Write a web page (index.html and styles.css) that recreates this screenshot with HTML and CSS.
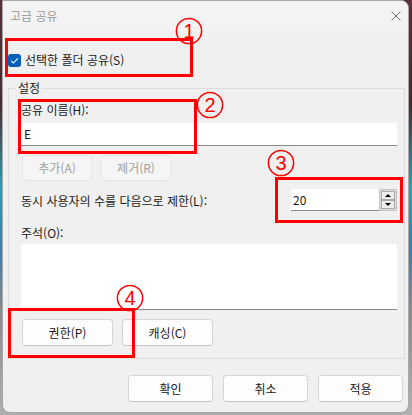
FILE: index.html
```html
<!DOCTYPE html>
<html lang="ko">
<head>
<meta charset="utf-8">
<title>고급 공유</title>
<link rel="stylesheet" href="styles.css">
</head>
<body>
<div class="dialog">
  <div class="titlebar">
    <span class="title">고급 공유</span>
    <svg class="close" width="10" height="10" viewBox="0 0 10 10"><path d="M0.5 0.5 L9.5 9.5 M9.5 0.5 L0.5 9.5" stroke="#6e6e6e" stroke-width="1" fill="none"/></svg>
  </div>
  <div class="content">
    <div class="check-row">
      <span class="checkbox"><svg width="13" height="13" viewBox="0 0 13 13"><path d="M3.3 6.8 L5.5 9 L9.8 4.3" stroke="#fff" stroke-width="1.1" fill="none"/></svg></span>
      <span>선택한 폴더 공유(S)</span>
    </div>
    <div class="group">
      <div class="legend"><span>설정</span></div>
      <div class="label lbl-name">공유 이름(H):</div>
      <div class="field field-name">E</div>
      <div class="btn-row">
        <div class="btn disabled w70">추가(A)</div>
        <div class="btn disabled w70">제거(R)</div>
      </div>
      <div class="limit-row">
        <span>동시 사용자의 수를 다음으로 제한(L):</span>
        <div class="spin">
          <div class="field spin-field">20</div>
          <div class="spin-btns">
            <div class="spin-btn"><span class="tri-up"></span></div>
            <div class="spin-btn"><span class="tri-down"></span></div>
          </div>
        </div>
      </div>
      <div class="label lbl-comment">주석(O):</div>
      <div class="textarea"></div>
      <div class="btn-row btn-row2">
        <div class="btn w91">권한(P)</div>
        <div class="btn w91">캐싱(C)</div>
      </div>
    </div>
    <div class="footer">
      <div class="btn w85">확인</div>
      <div class="btn w85">취소</div>
      <div class="btn w85">적용</div>
    </div>
  </div>
</div>

<div class="annot box1"></div>
<div class="annot box2"></div>
<div class="annot box3"></div>
<div class="annot box4"></div>

<svg class="num num1" width="28" height="28" viewBox="0 0 28 28"><circle cx="14" cy="14" r="12.6" stroke="#f00" stroke-width="1.5" fill="none"/><text x="14" y="21" text-anchor="middle">1</text></svg>
<svg class="num num2" width="28" height="28" viewBox="0 0 28 28"><circle cx="14" cy="14" r="12.6" stroke="#f00" stroke-width="1.5" fill="none"/><text x="14" y="21" text-anchor="middle">2</text></svg>
<svg class="num num3" width="28" height="28" viewBox="0 0 28 28"><circle cx="14" cy="14" r="12.6" stroke="#f00" stroke-width="1.5" fill="none"/><text x="14" y="21" text-anchor="middle">3</text></svg>
<svg class="num num4" width="28" height="28" viewBox="0 0 28 28"><circle cx="14" cy="14" r="12.6" stroke="#f00" stroke-width="1.5" fill="none"/><text x="14" y="21" text-anchor="middle">4</text></svg>
</body>
</html>
```
FILE: styles.css
```css
html, body {
  margin: 0;
  padding: 0;
}
body {
  width: 412px;
  height: 415px;
  position: relative;
  overflow: hidden;
  background: linear-gradient(180deg, #5a3038 0%, #4a2a30 25%, #2a9fb5 45%, #3b7fb0 60%, #8a8a8a 75%, #b0b0b0 100%);
  font-family: "Noto Sans CJK KR", "Noto Sans", sans-serif;
  font-size: 12px;
  color: #1a1a1a;
}
.dialog {
  margin-left: 2px;
  width: 407px;
  height: 413px;
  box-sizing: border-box;
  border: 1px solid #a8a8a8;
  border-radius: 0 8px 8px 8px;
  background: #f0f0f0;
  overflow: hidden;
  display: flex;
  flex-direction: column;
}
.titlebar {
  height: 30px;
  flex: none;
  background: #f3f3f3;
  display: flex;
  align-items: center;
  justify-content: space-between;
  padding: 0 7px;
}
.title {
  color: #9a9a9a;
  line-height: 16px;
}
.close {
  display: block;
}
.content {
  padding: 22px 3px 0 5px;
}
.check-row {
  display: flex;
  align-items: center;
  gap: 4px;
  height: 14px;
  line-height: 14px;
}
.checkbox {
  width: 13px;
  height: 13px;
  border-radius: 3px;
  background: #005fb8;
  display: block;
}
.checkbox svg {
  display: block;
}
.group {
  margin-top: 21px;
  border: 1px solid #dcdcdc;
  padding: 0 7px 12px 12px;
}
.legend {
  margin: -9px 0 0 -5px;
  height: 16px;
  line-height: 16px;
}
.legend span {
  background: #f0f0f0;
  padding: 0 2px;
}
.label {
  line-height: 16px;
}
.lbl-name {
  margin-top: 6px;
}
.field {
  background: #fff;
  border-bottom: 1px solid #8a8a8a;
  box-sizing: border-box;
}
.field-name {
  margin-top: 5px;
  height: 23px;
  line-height: 22px;
  padding-left: 3px;
}
.btn-row {
  margin-top: 9px;
  display: flex;
  gap: 9px;
  padding-left: 1px;
}
.btn {
  box-sizing: border-box;
  height: 26px;
  background: #fdfdfd;
  border: 1px solid #d5d5d5;
  border-bottom-color: #c4c4c4;
  border-radius: 4px;
  display: flex;
  align-items: center;
  justify-content: center;
  line-height: 16px;
}
.btn.disabled {
  background: #f5f5f5;
  border-color: #e5e5e5;
  color: #a0a0a0;
}
.w70 { width: 70px; }
.w91 { width: 91px; height: 27px; }
.w85 { width: 85px; height: 27px; }
.limit-row {
  margin-top: 8px;
  height: 22px;
  display: flex;
  align-items: center;
  justify-content: space-between;
}
.spin {
  display: flex;
  width: 106px;
  height: 22px;
}
.spin-field {
  width: 88px;
  height: 22px;
  line-height: 21px;
  padding-left: 2px;
}
.spin-btns {
  width: 18px;
  height: 22px;
  box-sizing: border-box;
  background: #dcdcdc;
  border: 1px solid #c4c4c4;
  display: flex;
  flex-direction: column;
  padding: 1px;
  gap: 0;
}
.spin-btn {
  flex: 1;
  box-sizing: border-box;
  background: #ededed;
  border: 1px solid #a9a9a9;
  display: flex;
  align-items: center;
  justify-content: center;
}
.tri-up {
  width: 0;
  height: 0;
  border-left: 3px solid transparent;
  border-right: 3px solid transparent;
  border-bottom: 3px solid #000;
}
.tri-down {
  width: 0;
  height: 0;
  border-left: 3px solid transparent;
  border-right: 3px solid transparent;
  border-top: 3px solid #000;
}
.lbl-comment {
  margin-top: 14px;
}
.textarea {
  margin-top: 3px;
  height: 66px;
  box-sizing: border-box;
  background: #fff;
  border-bottom: 1px solid #8a8a8a;
}
.footer {
  margin-top: 16px;
  display: flex;
  justify-content: flex-end;
  gap: 10px;
  padding-right: 2px;
}
.annot {
  position: absolute;
  box-sizing: border-box;
  border: 3px solid #f00;
}
.box1 { left: 5px; top: 38px; width: 188px; height: 39px; }
.box2 { left: 18px; top: 99px; width: 179px; height: 55px; }
.box3 { left: 275px; top: 177px; width: 128px; height: 46px; }
.box4 { left: 8px; top: 308px; width: 127px; height: 50px; }
.num {
  position: absolute;
}
.num text {
  font-family: "Liberation Sans", "DejaVu Sans", sans-serif;
  font-size: 20px;
  fill: #f00;
}
.num1 { left: 175px; top: 17px; }
.num2 { left: 196px; top: 91px; }
.num3 { left: 267px; top: 149px; }
.num4 { left: 116px; top: 284px; }
```
